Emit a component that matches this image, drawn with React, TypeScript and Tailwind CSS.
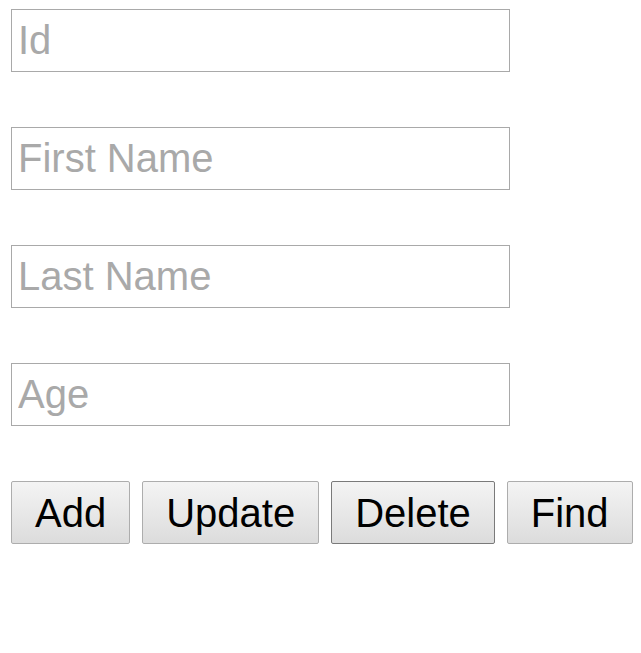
const fields = ['Id', 'First Name', 'Last Name', 'Age']
const actions = ['Add', 'Update', 'Delete', 'Find']

export default function App() {
  return (
    <div className="flex flex-col gap-[55px] pl-[11px] pt-[9px] font-['Liberation_Sans',Arial,sans-serif]">
      {fields.map((f) => (
        <input
          key={f}
          placeholder={f}
          className="h-[63px] w-[499px] border border-[#a9a9a9] bg-white px-[6px] text-[40px] text-black outline-none placeholder:text-[#a9a9a9]"
        />
      ))}
      <div className="flex gap-[12px]">
        {actions.map((a) => (
          <button
            key={a}
            className={`h-[63px] rounded-[2px] border bg-gradient-to-b from-[#f4f4f4] to-[#dcdcdc] px-[23px] text-[40px] leading-none text-black ${
              a === 'Delete' ? 'border-[#7a7a7a]' : 'border-[#adadad]'
            }`}
          >
            {a}
          </button>
        ))}
      </div>
    </div>
  )
}
